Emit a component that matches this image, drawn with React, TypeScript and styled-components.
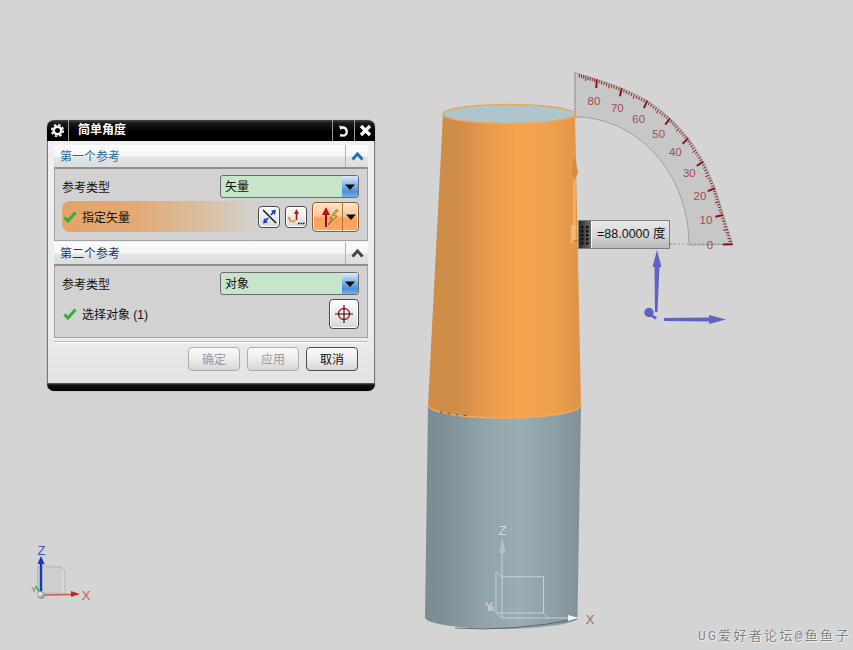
import React from 'react';
import styled, { createGlobalStyle } from 'styled-components';

const GlobalStyle = createGlobalStyle`
  html, body {
    margin: 0;
    padding: 0;
    background: #d4d4d4;
    overflow: hidden;
  }
`;

const UI_FONT = `"Liberation Sans", "Noto Sans CJK SC", sans-serif`;

const Viewport = styled.div`
  position: relative;
  width: 853px;
  height: 650px;
  background: #d4d4d4;
  overflow: hidden;
  font-family: ${UI_FONT};
`;

const Scene = styled.svg`
  position: absolute;
  left: 0;
  top: 0;
`;

// диалог лежит поверх 3D-вида
const DialogWindow = styled.div`
  position: absolute;
  left: 47px;
  top: 120px;
  width: 328px;
  height: 271px;
  display: flex;
  flex-direction: column;
  border-radius: 7px;
  overflow: hidden;
  box-shadow: 0 0 1px rgba(0, 0, 0, 0.5);
`;

const TitleBar = styled.div`
  height: 21px;
  flex: none;
  display: flex;
  align-items: stretch;
  background: linear-gradient(#4a4a4a 0, #1a1a1a 3px, #000 12px, #000 100%);
  color: #fff;
`;

const TitleIcon = styled.div<{ $width: number }>`
  width: ${props => props.$width}px;
  flex: none;
  display: flex;
  align-items: center;
  justify-content: center;
  border-left: 1px solid #9a9a9a;
  &:first-child {
    border-left: none;
    border-right: 1px solid #9a9a9a;
  }
`;

const TitleText = styled.div`
  flex: 1;
  padding-left: 9px;
  font-size: 12px;
  font-weight: 700;
  line-height: 20px;
`;

const DialogBody = styled.div`
  flex: 1;
  min-height: 0;
  display: flex;
  flex-direction: column;
  padding: 4px 6px 0;
  background: linear-gradient(#f0f0f0, #ececec 80%, #e2e2e2);
  border-left: 1px solid #777;
  border-right: 1px solid #777;
`;

const Section = styled.div`
  margin-bottom: 1px;
`;

const SectionHeader = styled.div<{ $active?: boolean }>`
  height: 22px;
  display: flex;
  align-items: stretch;
  background: linear-gradient(#fafafa 0, #f6f6f6 50%, #e2e6e6 55%, #dcdcdc 100%);
  color: ${props => (props.$active ? '#1b6a9c' : '#1c2f72')};
`;

const SectionTitle = styled.div`
  flex: 1;
  padding-left: 6px;
  font-size: 12px;
  line-height: 25px;
`;

const CollapseButton = styled.div`
  width: 22px;
  display: flex;
  align-items: center;
  justify-content: center;
  border-left: 1px solid #b4b4b4;
`;

const SectionContent = styled.div`
  height: 74px;
  box-sizing: border-box;
  padding: 6px 8px 0 7px;
  display: flex;
  flex-direction: column;
  gap: 3px;
  background: #d2d2d2;
  border: 1px solid #a2a2a2;
  border-top: 2px solid #8f8f8f;
`;

const FieldRow = styled.div`
  height: 23px;
  flex: none;
  display: flex;
  align-items: center;
  justify-content: space-between;
`;

const FieldLabel = styled.span`
  font-size: 12px;
  color: #111;
`;

const SelectBox = styled.div`
  width: 139px;
  height: 23px;
  box-sizing: border-box;
  display: flex;
  border: 1px solid #6c6c6c;
  border-radius: 3px;
  background: #c6e5c9;
  overflow: hidden;
`;

const SelectValue = styled.div`
  flex: 1;
  padding-left: 4px;
  font-size: 12px;
  line-height: 23px;
  color: #111;
`;

const SelectArrow = styled.div`
  width: 16px;
  display: flex;
  align-items: center;
  justify-content: center;
  background: linear-gradient(#dfeafa, #7fb3e6 45%, #4a90da 75%, #76aee6);
`;

const StatusRow = styled.div<{ $highlight?: boolean }>`
  height: 31px;
  flex: none;
  display: flex;
  align-items: center;
  gap: 5px;
  padding-left: 1px;
  border-radius: 8px;
  background: ${props =>
    props.$highlight
      ? 'linear-gradient(90deg, #e4a366 0, #e3aa76 25%, #d9c0a6 50%, #d4cfc8 62%, #d2d2d2 70%)'
      : 'transparent'};
`;

const StatusText = styled.span`
  flex: 1;
  font-size: 12px;
  color: #111;
`;

const ToolButton = styled.div<{ $size: number }>`
  width: ${props => props.$size}px;
  height: ${props => props.$size}px;
  box-sizing: border-box;
  flex: none;
  display: flex;
  align-items: center;
  justify-content: center;
  border: 1px solid #4a4a4a;
  border-radius: 4px;
  background: linear-gradient(#fdfdfd, #ececec 50%, #d8d8d8);
  box-shadow: inset 0 0 0 1px #fff;
`;

const SplitButton = styled.div`
  width: 47px;
  height: 30px;
  box-sizing: border-box;
  flex: none;
  display: flex;
  border: 1px solid #8f6232;
  border-radius: 4px;
  background: linear-gradient(#ffe3c6 0, #ffc998 45%, #ff9f58 55%, #ffa868 100%);
  box-shadow: inset 0 0 0 1px #ffe9d2;
`;

const SplitMain = styled.div`
  width: 29px;
  display: flex;
  align-items: center;
  justify-content: center;
  border-right: 1px solid #a9743f;
`;

const SplitArrow = styled.div`
  flex: 1;
  display: flex;
  align-items: center;
  justify-content: center;
`;

const FooterDivider = styled.div`
  height: 1px;
  margin-top: 2px;
  background: #b8b8b8;
  border-bottom: 1px solid #fff;
`;

const Footer = styled.div`
  display: flex;
  justify-content: flex-end;
  gap: 7px;
  padding: 4px 10px 0 0;
`;

const DialogButton = styled.div<{ $disabled?: boolean }>`
  width: 52px;
  height: 24px;
  box-sizing: border-box;
  border: 1px solid ${props => (props.$disabled ? '#adadad' : '#4d4d4d')};
  border-radius: 4px;
  font-size: 12px;
  line-height: 24px;
  text-align: center;
  color: ${props => (props.$disabled ? '#9a9a9a' : '#111')};
  background: linear-gradient(#fbfbfb, #ececec 50%, #d6d6d6);
`;

const BottomBar = styled.div`
  height: 8px;
  flex: none;
  background: linear-gradient(#666 0, #111 2px, #000);
`;

const AngleBox = styled.div`
  position: absolute;
  left: 578px;
  top: 220px;
  width: 92px;
  height: 29px;
  box-sizing: border-box;
  display: flex;
  border: 1px solid #7d7d7d;
  background: linear-gradient(#e8e8e8, #d8d8d8 50%, #b9b9b9);
`;

const AngleHandle = styled.div`
  width: 12px;
  flex: none;
  border-right: 1px solid #fff;
  background: linear-gradient(90deg, #2a2a2a, #6e6e6e);
  display: flex;
  align-items: center;
  justify-content: center;
`;

const AngleValue = styled.div`
  flex: 1;
  padding-left: 5px;
  font-size: 12.5px;
  line-height: 27px;
  color: #111;
  white-space: nowrap;
`;

const Watermark = styled.div`
  position: absolute;
  left: 698px;
  top: 628px;
  font-family: "Liberation Mono", "Noto Sans CJK SC", monospace;
  font-size: 13px;
  line-height: 18px;
  letter-spacing: 2.3px;
  color: #808080;
  text-shadow: 0 0 2px #fff, 1px 1px 1px #eee;
  white-space: nowrap;
`;

const AxisLabel = styled.text<{ $color: string; $size?: number }>`
  font-family: "Liberation Sans", sans-serif;
  font-size: ${props => props.$size ?? 13}px;
  font-weight: 300;
  text-anchor: middle;
  fill: ${props => props.$color};
`;

const ScaleLabel = styled.text`
  font-family: "Liberation Sans", sans-serif;
  font-size: 11.5px;
  text-anchor: middle;
  fill: #a24e50;
`;

type Pt = [number, number];

// точки внешней дуги транспортира через каждые 10 градусов
const outerArc: Pt[] = [
  [732.7, 244.3], [723.3, 215], [715, 188.3], [703.3, 161.7], [688.3, 138.3],
  [670, 118.3], [647.3, 100.7], [621.7, 88.3], [596.7, 79.3], [575, 72.7],
];

const labels: { text: string; at: Pt }[] = [
  { text: '80', at: [594, 104.5] },
  { text: '70', at: [617.3, 112] },
  { text: '60', at: [638.7, 123] },
  { text: '50', at: [658.7, 138] },
  { text: '40', at: [675.3, 156] },
  { text: '30', at: [689.3, 177] },
  { text: '20', at: [700, 200] },
  { text: '10', at: [706, 224] },
  { text: '0', at: [710, 249] },
];

const innerPoint = (deg: number): Pt => {
  const a = (deg * Math.PI) / 180;
  return [575 + 114 * Math.cos(a), 245 - 128 * Math.sin(a)];
};

const outerPoint = (deg: number): Pt => {
  const i = Math.min(Math.floor(deg / 10), 8);
  const t = deg / 10 - i;
  const [x0, y0] = outerArc[i];
  const [x1, y1] = outerArc[i + 1];
  return [x0 + (x1 - x0) * t, y0 + (y1 - y0) * t];
};

const sectorPath = () => {
  const pts = outerArc;
  let d = `M${pts[0][0]},${pts[0][1]}`;
  for (let i = 0; i < pts.length - 1; i++) {
    const p0 = pts[Math.max(i - 1, 0)];
    const p1 = pts[i];
    const p2 = pts[i + 1];
    const p3 = pts[Math.min(i + 2, pts.length - 1)];
    d += ` C${p1[0] + (p2[0] - p0[0]) / 6},${p1[1] + (p2[1] - p0[1]) / 6} ${p2[0] - (p3[0] - p1[0]) / 6},${p2[1] - (p3[1] - p1[1]) / 6} ${p2[0]},${p2[1]}`;
  }
  d += ' L575,117';
  for (let deg = 88; deg >= 0; deg -= 2) {
    const [x, y] = innerPoint(deg);
    d += ` L${x.toFixed(1)},${y.toFixed(1)}`;
  }
  return d + ' Z';
};

const Ticks: React.FC = () => {
  const items = [];
  for (let deg = 0; deg <= 88; deg++) {
    const [ox, oy] = outerPoint(deg);
    const [ix, iy] = innerPoint(deg);
    const major = deg % 10 === 0;
    const k = major ? 0.22 : deg % 5 === 0 ? 0.12 : 0.08;
    items.push(
      <line
        key={deg}
        x1={ox}
        y1={oy}
        x2={ox + (ix - ox) * k}
        y2={oy + (iy - oy) * k}
        stroke={major ? '#8a1418' : '#8e3236'}
        strokeWidth={major ? 2 : 1.1}
      />
    );
  }
  return <g>{items}</g>;
};

const Protractor: React.FC = () => (
  <g>
    <path d={sectorPath()} fill="#c7c7c7" stroke="#a0a0a0" strokeWidth="1" />
    <line x1="575" y1="72" x2="575" y2="117" stroke="#8e8e8e" strokeDasharray="1.5 1.5" />
    <line x1="670" y1="244" x2="734" y2="244" stroke="#9a9a9a" strokeDasharray="2 2" />
    <line x1="670" y1="243.5" x2="673" y2="243.5" stroke="#e8a050" strokeWidth="1.5" />
    <Ticks />
    {labels.map(l => (
      <ScaleLabel key={l.text} x={l.at[0]} y={l.at[1]}>{l.text}</ScaleLabel>
    ))}
  </g>
);

const Cylinder: React.FC = () => (
  <g>
    <defs>
      <linearGradient id="orangeSide" gradientUnits="userSpaceOnUse" x1="428" y1="0" x2="581" y2="0">
        <stop offset="0" stopColor="#cf8c46" />
        <stop offset="0.2" stopColor="#cf8d48" />
        <stop offset="0.38" stopColor="#e89a4c" />
        <stop offset="0.58" stopColor="#f7a34f" />
        <stop offset="0.8" stopColor="#f0a04e" />
        <stop offset="1" stopColor="#dd9448" />
      </linearGradient>
      <linearGradient id="greySide" gradientUnits="userSpaceOnUse" x1="425" y1="0" x2="581" y2="0">
        <stop offset="0" stopColor="#7c8d92" />
        <stop offset="0.14" stopColor="#7f9096" />
        <stop offset="0.36" stopColor="#90a3a9" />
        <stop offset="0.6" stopColor="#9aadb3" />
        <stop offset="0.85" stopColor="#8a9ea3" />
        <stop offset="1" stopColor="#7f9195" />
      </linearGradient>
      <radialGradient id="triadBall" cx="0.4" cy="0.35" r="0.7">
        <stop offset="0" stopColor="#fafafa" />
        <stop offset="1" stopColor="#777" />
      </radialGradient>
    </defs>
    <path d="M428,405 L425,618 A76.5,12 0 0 0 577.5,618 L581,405 Z" fill="url(#greySide)" />
    <path d="M455,628 Q510,632 577.5,619" fill="none" stroke="#3d4a4c" strokeWidth="1" opacity="0.7" />
    <path d="M443,114 L428,405 A76.5,13 0 0 0 581,405 L575,114 Z" fill="url(#orangeSide)" />
    <path d="M428,405 A76.5,13 0 0 0 581,405" fill="none" stroke="#f2a95c" strokeWidth="1.4" />
    <path d="M440,412 A76.5,13 0 0 0 470,416" fill="none" stroke="#4b4030" strokeWidth="0.8" strokeDasharray="3 5" />
    <ellipse cx="509" cy="114" rx="66" ry="9.5" fill="#aec6cb" stroke="#e9a763" strokeWidth="1.6" />
    {/* стрелка вектора на цилиндре */}
    <path d="M574,150 L578,173 L574,180 L571,173 Z" fill="#d58c42" stroke="#eba65e" strokeWidth="0.6" />
    <line x1="574.5" y1="180" x2="574.5" y2="240" stroke="#f3ab60" strokeWidth="3" />
    <rect x="571" y="225" width="4" height="18" fill="#f5bb7a" opacity="0.8" />
    <line x1="573" y1="241" x2="579" y2="241" stroke="#b9772f" strokeWidth="1" />
  </g>
);

const BlueArrows: React.FC = () => (
  <g fill="#5f64c2" stroke="none">
    <path d="M657,250 L661.5,267 L659.5,267 L657.5,312 L655,312 L654.5,267 L652.5,267 Z" />
    <circle cx="649" cy="312.5" r="4.7" />
    <path d="M651,314 L657,317 L655.5,319.5 L649.5,316 Z" />
    <path d="M664,318 L709,317.5 L709,315 L726,319.5 L709,324 L709,321.5 L664,321 Z" />
  </g>
);

const CornerTriad: React.FC = () => (
  <g>
    <rect x="37.5" y="567" width="23" height="26" fill="#cfcfcf" stroke="#bcbcbc" strokeWidth="1.2" />
    <path d="M60.5,567 L65,571 L65,593 L60.5,593 M37.5,567 L42,565.5 L60.5,567" fill="#d6d6d6" stroke="#bcbcbc" strokeWidth="1.2" />
    <line x1="41" y1="595" x2="41" y2="562" stroke="#1038c0" strokeWidth="2.4" />
    <path d="M41,556 L44.5,564 L37.5,564 Z" fill="#1038c0" />
    <line x1="43" y1="595" x2="72" y2="594.5" stroke="#c85a50" strokeWidth="1.6" />
    <path d="M80,594 L71,591 L71,597 Z" fill="#c02a22" />
    <path d="M36,586 L40,593" stroke="#3aa04a" strokeWidth="1.4" />
    <circle cx="41" cy="595" r="3.8" fill="url(#triadBall)" />
    <AxisLabel $color="#3f55c0" x="41.5" y="555">Z</AxisLabel>
    <AxisLabel $color="#c85a55" x="86" y="600">X</AxisLabel>
    <AxisLabel $color="#3a8a45" $size={8} x="34" y="592">Y</AxisLabel>
  </g>
);

const ModelTriad: React.FC = () => (
  <g fill="none" stroke="#c4d0d2" strokeWidth="1">
    <path d="M502,576.7 H543.5 V613 M502,618 V540 M496,571.7 V613 L502,618 M496,571.7 L502,576.7 M496,613 H543.5 L549,618 M502,618 H568" />
    <path d="M502.5,538 L505.5,553 L499.5,553 Z" fill="#b7c2c5" stroke="none" />
    <path d="M579,618 L568,615 L568,621 Z" fill="#f2f2f2" stroke="none" />
    <rect x="489" y="606" width="5" height="5" fill="#b8c0c2" stroke="none" />
    <AxisLabel $color="#d3dadb" stroke="none" x="502.5" y="535">Z</AxisLabel>
    <AxisLabel $color="#d0d6d6" stroke="none" x="489" y="611">Y</AxisLabel>
    <AxisLabel $color="#9c6c6c" stroke="none" x="590" y="624">X</AxisLabel>
  </g>
);

const CheckIcon = () => (
  <svg width="14" height="12" viewBox="0 0 14 12">
    <path d="M1.5,6.5 L5,10 L12.5,1.5" fill="none" stroke="#32b03e" strokeWidth="3" />
  </svg>
);

const ChevronUp: React.FC<{ color: string }> = ({ color }) => (
  <svg width="13" height="9" viewBox="0 0 13 9">
    <path d="M1.5,7.5 L6.5,2 L11.5,7.5" fill="none" stroke={color} strokeWidth="3" />
  </svg>
);

const DownTriangle: React.FC<{ width?: number }> = ({ width = 10 }) => (
  <svg width={width} height="8" viewBox="0 0 10 8">
    <path d="M0,1.5 H10 L5,7 Z" fill="#0b0b0b" />
  </svg>
);

const GearIcon = () => (
  <svg width="15" height="15" viewBox="0 0 15 15">
    <circle cx="7.5" cy="7.5" r="3.8" fill="none" stroke="#fff" strokeWidth="2.6" />
    <circle cx="7.5" cy="7.5" r="5.8" fill="none" stroke="#fff" strokeWidth="1.6" strokeDasharray="2.5 2.05" />
  </svg>
);

const UndoIcon = () => (
  <svg width="14" height="14" viewBox="0 0 14 14">
    <path d="M5,3.5 A4.2,4.2 0 0 1 7,11.6 L3,11.2" fill="none" stroke="#f2f2f2" strokeWidth="2.4" />
    <path d="M2,1.5 L7,3 L3.5,6 Z" fill="#f2f2f2" />
  </svg>
);

const CloseIcon = () => (
  <svg width="13" height="13" viewBox="0 0 13 13">
    <path d="M2,2 L11,11 M11,2 L2,11" stroke="#fff" strokeWidth="3.2" />
  </svg>
);

const ReverseIcon = () => (
  <svg width="17" height="17" viewBox="0 0 17 17">
    <path d="M2,2 L15,15" stroke="#111" strokeWidth="1.4" />
    <path d="M15,1.5 L14,7 L12.6,5.4 L10.4,7.6 L9.2,6.4 L11.4,4.2 L10,2.8 Z" fill="#1b3fc4" />
    <path d="M2,15.5 L3,10 L4.4,11.6 L6.6,9.4 L7.8,10.6 L5.6,12.8 L7,14.2 Z" fill="#1b3fc4" />
  </svg>
);

const VectorDialogIcon = () => (
  <svg width="18" height="18" viewBox="0 0 18 18">
    <path d="M9.5,12 V5" stroke="#b01010" strokeWidth="1.6" />
    <path d="M9.5,1 L12,6 L7,6 Z" fill="#c01010" />
    <path d="M8,12 Q6,15 3,12.5 L2,9.5" fill="none" stroke="#e98a2c" strokeWidth="1.6" />
    <path d="M0.5,11 L2,8.5 L4,10.5 Z" fill="#e98a2c" />
    <path d="M11,15.5 h1.6 M13.6,15.5 h1.6 M16,15.5 h1.6" stroke="#111" strokeWidth="1.6" />
  </svg>
);

const InferredVectorIcon = () => (
  <svg width="24" height="24" viewBox="0 0 24 24">
    <path d="M10,22 V9" stroke="#8a0f10" strokeWidth="2" />
    <path d="M10,2 L14,10 L6,10 Z" fill="#b80f12" />
    <path d="M20,5 L14,13 L17,13 L12,20 L21,11 L17.5,11 L22,5 Z" fill="#ffe24a" stroke="#5a4a10" strokeWidth="0.7" />
  </svg>
);

const CrosshairIcon = () => (
  <svg width="24" height="24" viewBox="0 0 24 24">
    <circle cx="12" cy="12" r="5.5" fill="none" stroke="#c4161c" strokeWidth="1.4" />
    <path d="M3,12 H21 M12,3 V21" stroke="#111" strokeWidth="1.1" />
  </svg>
);

const GripDots = () => (
  <svg width="8" height="20" viewBox="0 0 8 20">
    {[1, 5, 9, 13, 17].map(y => (
      <g key={y} fill="#111">
        <rect x="0" y={y} width="2.5" height="2.5" />
        <rect x="5" y={y} width="2.5" height="2.5" />
      </g>
    ))}
  </svg>
);

const SelectField: React.FC<{ value: string }> = ({ value }) => (
  <SelectBox>
    <SelectValue>{value}</SelectValue>
    <SelectArrow>
      <DownTriangle />
    </SelectArrow>
  </SelectBox>
);

const App: React.FC = () => (
  <Viewport>
    <GlobalStyle />
    <Scene width="853" height="650" viewBox="0 0 853 650">
      <Protractor />
      <Cylinder />
      <BlueArrows />
      <CornerTriad />
      <ModelTriad />
    </Scene>

    <DialogWindow>
      <TitleBar>
        <TitleIcon $width={21}><GearIcon /></TitleIcon>
        <TitleText>简单角度</TitleText>
        <TitleIcon $width={21}><UndoIcon /></TitleIcon>
        <TitleIcon $width={20}><CloseIcon /></TitleIcon>
      </TitleBar>
      <DialogBody>
        <Section>
          <SectionHeader $active>
            <SectionTitle>第一个参考</SectionTitle>
            <CollapseButton><ChevronUp color="#1f6fc0" /></CollapseButton>
          </SectionHeader>
          <SectionContent>
            <FieldRow>
              <FieldLabel>参考类型</FieldLabel>
              <SelectField value="矢量" />
            </FieldRow>
            <StatusRow $highlight>
              <CheckIcon />
              <StatusText>指定矢量</StatusText>
              <ToolButton $size={22}><ReverseIcon /></ToolButton>
              <ToolButton $size={22}><VectorDialogIcon /></ToolButton>
              <SplitButton>
                <SplitMain><InferredVectorIcon /></SplitMain>
                <SplitArrow><DownTriangle /></SplitArrow>
              </SplitButton>
            </StatusRow>
          </SectionContent>
        </Section>
        <Section>
          <SectionHeader>
            <SectionTitle>第二个参考</SectionTitle>
            <CollapseButton><ChevronUp color="#444" /></CollapseButton>
          </SectionHeader>
          <SectionContent>
            <FieldRow>
              <FieldLabel>参考类型</FieldLabel>
              <SelectField value="对象" />
            </FieldRow>
            <StatusRow>
              <CheckIcon />
              <StatusText>选择对象 (1)</StatusText>
              <ToolButton $size={30}><CrosshairIcon /></ToolButton>
            </StatusRow>
          </SectionContent>
        </Section>
        <FooterDivider />
        <Footer>
          <DialogButton $disabled>确定</DialogButton>
          <DialogButton $disabled>应用</DialogButton>
          <DialogButton>取消</DialogButton>
        </Footer>
      </DialogBody>
      <BottomBar />
    </DialogWindow>

    <AngleBox>
      <AngleHandle><GripDots /></AngleHandle>
      <AngleValue>=88.0000 度</AngleValue>
    </AngleBox>
    <Watermark>UG爱好者论坛@鱼鱼子</Watermark>
  </Viewport>
);

export default App;
